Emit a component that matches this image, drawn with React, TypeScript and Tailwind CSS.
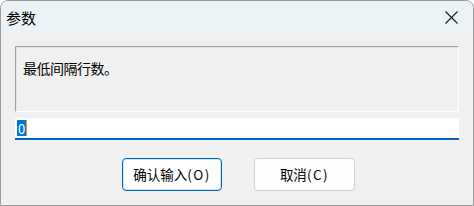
import React from "react";

const FONT = '"Noto Sans CJK SC", "Noto Sans", sans-serif';

export default function App() {
  return (
    <div
      className="flex h-[206px] w-[474px] flex-col overflow-hidden rounded-t-[8px] border border-[#9c9c9c] bg-[#f0f0f0] text-black"
      style={{ fontFamily: FONT }}
    >
      {/* title bar */}
      <div className="flex h-[33px] shrink-0 items-center justify-between bg-[#ebf3f6] pl-[5px] pr-[14px]">
        <span className="text-[15px] leading-none">参数</span>
        <svg width="13" height="13" viewBox="0 0 13 13" className="mr-[1px]">
          <path d="M0.5 0.5 L12.5 12.5 M12.5 0.5 L0.5 12.5" stroke="#1a1a1a" strokeWidth="1.1" />
        </svg>
      </div>

      <div className="flex flex-1 flex-col px-[14px] pt-[12px]">
        {/* static text box */}
        <div className="h-[66px] border border-b-white border-l-[#a0a0a0] border-r-white border-t-[#a0a0a0] shadow-[inset_1px_1px_0_#e3e3e3] pl-[7px] pt-[8px]">
          <span className="text-[14px] leading-[16px] tracking-[-0.5px]">最低间隔行数。</span>
        </div>

        {/* edit */}
        <div className="mt-[6px] flex h-[22px] items-center border-b-2 border-[#0067c0] bg-white pl-[2px]">
          <span className="flex h-[16px] items-center bg-[#0078d7] px-[1px] text-[13px] leading-none text-white">0</span>
          <span className="h-[16px] w-[1px] bg-[#f08c2c]" />
        </div>

        {/* buttons */}
        <div className="mt-[18px] flex justify-center gap-[32px] pl-[3px]">
          <button className="flex h-[33px] w-[100px] items-center justify-center rounded-[4px] border border-[#0067c0] bg-white text-[13.5px] shadow-[inset_0_0_0_1px_#cfe3f5]">
            确认输入<span className="tracking-[1.5px]">(O)</span>
          </button>
          <button className="flex h-[33px] w-[101px] items-center justify-center rounded-[4px] border border-[#d0d0d0] bg-[#fdfdfd] text-[13.5px]">
            取消<span className="tracking-[1.5px]">(C)</span>
          </button>
        </div>
      </div>
    </div>
  );
}
